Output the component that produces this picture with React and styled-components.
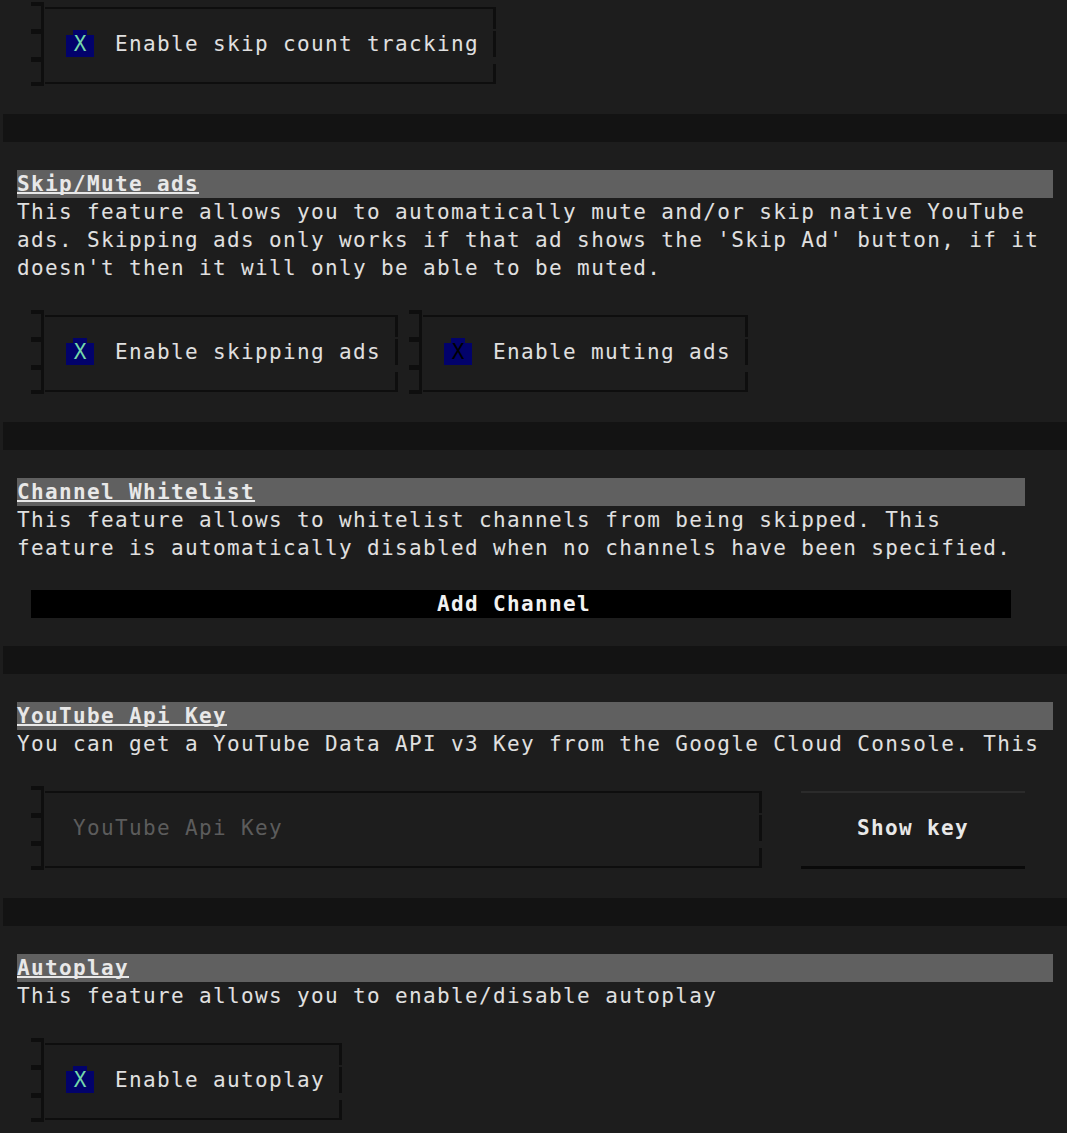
import React from 'react'
import styled, { createGlobalStyle } from 'styled-components'

// terminal grid: every cell is 14px wide and 28px tall
const CELL = 14
const LINE = '#0e0e0e'
const NAVY = '#02026b'

const GlobalStyle = createGlobalStyle`
  html, body {
    margin: 0;
    padding: 0;
    background: #1d1d1d;
    overflow: hidden;
  }
  body {
    font-family: "DejaVu Sans Mono", "Liberation Mono", monospace;
    font-size: 21px;
    line-height: 28px;
    letter-spacing: 1.36px;
    color: #e0e0e0;
  }
`

const Page = styled.div`
    margin-left: 3px;
    display: flex;
    flex-direction: column;
    gap: 28px;
    background: #131313;
`

const Section = styled.section`
    background: #1d1d1d;
    padding: ${p => p.$top ?? 28}px ${CELL}px 28px;
`

const Content = styled.div`
    width: ${p => p.$cols * CELL + 4}px;
`

const Heading = styled.div`
    width: ${p => p.$cols * CELL}px;
    height: 28px;
    background: #606060;
`

const Title = styled.span`
    font-weight: bold;
    color: #e8e8e8;
    text-decoration: underline;
    text-decoration-thickness: 2px;
    text-underline-offset: 1px;
    text-decoration-skip-ink: none;
`

const Desc = styled.p`
    margin: 0;
`

const Controls = styled.div`
    display: flex;
    margin-top: ${p => p.$flush ? 0 : 28}px;
    padding-left: ${CELL}px;
`

const Box = styled.div`
    display: flex;
    height: 84px;
    margin-right: 11px;
`

// the "[" drawn down the left side of a box, one serif per row edge
const Bracket = styled.span`
    flex: none;
    width: ${CELL}px;
    height: 84px;
    background:
        linear-gradient(${LINE}, ${LINE}) 10px 0 / 3px 100% no-repeat,
        linear-gradient(to bottom,
            ${LINE} 0 4px, transparent 4px 27px,
            ${LINE} 27px 32px, transparent 32px 55px,
            ${LINE} 55px 60px, transparent 60px 80px,
            ${LINE} 80px 84px) 0 0 / 13px 100% no-repeat;
`

const Frame = styled.div`
    display: flex;
    align-items: center;
    box-sizing: border-box;
    margin-top: 5px;
    height: 77px;
    width: ${p => p.$width ? `${p.$width}px` : 'auto'};
    padding: 0 17px 3px 28px;
    border-top: 2px solid ${LINE};
    border-bottom: 2px solid ${LINE};
    background: linear-gradient(to bottom,
        ${LINE} 0 20px, transparent 20px 22px,
        ${LINE} 22px 48px, transparent 48px 55px,
        ${LINE} 55px 100%) right 0 / 3px 100% no-repeat;
`

const Check = styled.span`
    flex: none;
    width: 28px;
    height: 28px;
    margin: 0 21px 0 -7px;
    display: flex;
    justify-content: center;
    letter-spacing: 0;
    color: ${p => p.$on ? '#74d9aa' : '#000'};
    background:
        linear-gradient(${NAVY}, ${NAVY}) 7px 0 / 14px 27px no-repeat,
        linear-gradient(${NAVY}, ${NAVY}) 0 5px / 28px 22px no-repeat;
`

const Label = styled.span`
    white-space: pre;
`

const KeyInput = styled.input`
    width: 100%;
    height: 28px;
    padding: 0;
    border: none;
    outline: none;
    background: transparent;
    font: inherit;
    letter-spacing: inherit;
    color: #e0e0e0;
    &::placeholder {
        color: #5c5c5c;
    }
`

const KeyButton = styled.button`
    flex: none;
    box-sizing: border-box;
    width: ${16 * CELL}px;
    height: 78px;
    margin: 5px 0 0 28px;
    padding: 0 0 3px;
    border: none;
    border-top: 2px solid #2b2b2b;
    border-bottom: 3px solid #0a0a0a;
    background: transparent;
    font: inherit;
    font-weight: bold;
    letter-spacing: inherit;
    color: #e8e8e8;
`

const AddButton = styled.button`
    display: block;
    box-sizing: border-box;
    width: ${70 * CELL}px;
    height: 28px;
    padding: 0 ${CELL}px 0 0;
    border: none;
    background: #000;
    font: inherit;
    font-weight: bold;
    letter-spacing: inherit;
    line-height: 28px;
    color: #f2f2f2;
    text-align: center;
`

const Toggle = ({ label, on = true }) => (
    <Box>
        <Bracket />
        <Frame>
            <Check $on={on}>X</Check>
            <Label>{label}</Label>
        </Frame>
    </Box>
)

const Feature = ({ title, cols = 74, children, text }) => (
    <Section>
        <Content $cols={cols}>
            <Heading $cols={cols}><Title>{title}</Title></Heading>
            <Desc>{text}</Desc>
            {children}
        </Content>
    </Section>
)

export default function App() {
    return (
        <>
            <GlobalStyle />
            <Page>
                <Section $top={2}>
                    <Content $cols={74}>
                        <Controls $flush>
                            <Toggle label="Enable skip count tracking" />
                        </Controls>
                    </Content>
                </Section>

                <Feature
                    title="Skip/Mute ads"
                    text="This feature allows you to automatically mute and/or skip native YouTube ads. Skipping ads only works if that ad shows the 'Skip Ad' button, if it doesn't then it will only be able to be muted."
                >
                    <Controls>
                        <Toggle label="Enable skipping ads" />
                        <Toggle label="Enable muting ads" on={false} />
                    </Controls>
                </Feature>

                <Feature
                    title="Channel Whitelist"
                    cols={72}
                    text="This feature allows to whitelist channels from being skipped. This feature is automatically disabled when no channels have been specified."
                >
                    <Controls>
                        <AddButton>Add Channel</AddButton>
                    </Controls>
                </Feature>

                <Feature
                    title="YouTube Api Key"
                    text="You can get a YouTube Data API v3 Key from the Google Cloud Console. This"
                >
                    <Controls>
                        <Box>
                            <Bracket />
                            <Frame $width={51 * CELL + 3}>
                                <KeyInput placeholder="YouTube Api Key" />
                            </Frame>
                        </Box>
                        <KeyButton>Show key</KeyButton>
                    </Controls>
                </Feature>

                <Feature
                    title="Autoplay"
                    text="This feature allows you to enable/disable autoplay"
                >
                    <Controls>
                        <Toggle label="Enable autoplay" />
                    </Controls>
                </Feature>
            </Page>
        </>
    )
}
